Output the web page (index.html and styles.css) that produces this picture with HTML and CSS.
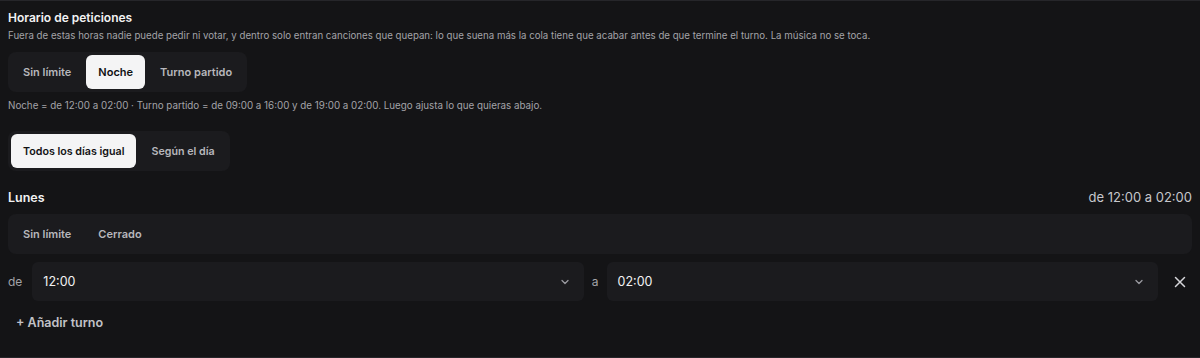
FILE: index.html
```html
<!DOCTYPE html>
<html lang="es">
<head>
  <meta charset="UTF-8" />
  <meta name="viewport" content="width=device-width, initial-scale=1.0"/>
  <title>Horario de peticiones</title>
  <link rel="stylesheet" href="styles.css">
</head>
<body>
  <section class="panel">
    <h2 class="title">Horario de peticiones</h2>
    <p class="desc">Fuera de estas horas nadie puede pedir ni votar, y dentro solo entran canciones que quepan: lo que suena más la cola tiene que acabar antes de que termine el turno. La música no se toca.</p>

    <div class="seg">
      <button>Sin límite</button>
      <button class="on">Noche</button>
      <button>Turno partido</button>
    </div>
    <p class="hint">Noche = de 12:00 a 02:00 · Turno partido = de 09:00 a 16:00 y de 19:00 a 02:00. Luego ajusta lo que quieras abajo.</p>

    <div class="seg seg-mode">
      <button class="on">Todos los días igual</button>
      <button>Según el día</button>
    </div>

    <div class="day-head">
      <span class="day">Lunes</span>
      <span class="range">de 12:00 a 02:00</span>
    </div>
    <div class="seg seg-wide">
      <button>Sin límite</button>
      <button>Cerrado</button>
    </div>

    <div class="shift">
      <span class="lbl">de</span>
      <div class="select">
        <span>12:00</span>
        <svg width="10" height="10" viewBox="0 0 10 10"><path d="M2 3.5l3 3 3-3" fill="none" stroke="#9a9aa0" stroke-width="1.3" stroke-linecap="round" stroke-linejoin="round"/></svg>
      </div>
      <span class="lbl lbl-a">a</span>
      <div class="select">
        <span>02:00</span>
        <svg width="10" height="10" viewBox="0 0 10 10"><path d="M2 3.5l3 3 3-3" fill="none" stroke="#9a9aa0" stroke-width="1.3" stroke-linecap="round" stroke-linejoin="round"/></svg>
      </div>
      <button class="remove" aria-label="Quitar">
        <svg width="12" height="12" viewBox="0 0 12 12"><path d="M1.5 1.5l9 9M10.5 1.5l-9 9" stroke="#d6d6da" stroke-width="1.5" stroke-linecap="round"/></svg>
      </button>
    </div>
    <button class="add">+ Añadir turno</button>
  </section>
</body>
</html>
```

FILE: styles.css
```css
html, body { margin: 0; padding: 0; background: #141416; font-family: Inter, "Noto Sans", sans-serif; color: #f2f2f3; }
.panel { height: 358px; box-sizing: border-box; border-top: 1px solid #26262a; border-bottom: 1px solid #26262a; padding: 9px 8px 0 8px; }
.title { margin: 0; font-size: 12px; font-weight: 600; line-height: 16px; }
.desc { margin: 3px 0 0 0; font-size: 9.7px; line-height: 14px; color: #a3a3a8; }
.seg { display: inline-flex; gap: 3px; padding: 3px; background: #1b1b1e; border-radius: 8px; margin-top: 9px; }
.seg button { border: 0; background: transparent; color: #b7b7bc; font: 600 11px Inter, sans-serif; padding: 0 12px; height: 34px; border-radius: 6px; cursor: pointer; }
.seg button.on { background: #f4f4f5; color: #111113; }
.hint { margin: 7px 0 0 0; font-size: 9.8px; line-height: 14px; color: #a3a3a8; }
.seg-mode { margin-top: 18px; }
.seg-mode button { font-size: 10.7px; }
.day-head { display: flex; justify-content: space-between; align-items: center; margin-top: 18px; }
.day { font-size: 12.5px; font-weight: 600; }
.range { font-size: 13px; color: #c7c7cc; }
.seg-wide { display: flex; margin-top: 9px; }
.shift { display: flex; align-items: center; gap: 10px; margin-top: 8px; }
.lbl { font-size: 12px; color: #a3a3a8; }
.lbl-a { margin: 0 -2px; }
.select { flex: 1; height: 39px; display: flex; align-items: center; justify-content: space-between; padding: 0 14px 0 11px; background: #1b1b1e; border-radius: 6px; font-size: 12.5px; font-weight: 400; }
.remove { width: 24px; height: 30px; border: 0; background: transparent; display: flex; align-items: center; justify-content: center; padding: 0; }
.add { margin-top: 10px; border: 0; background: transparent; color: #c2c2c7; font: 600 12.5px Inter, sans-serif; padding: 4px 8px; }
```
